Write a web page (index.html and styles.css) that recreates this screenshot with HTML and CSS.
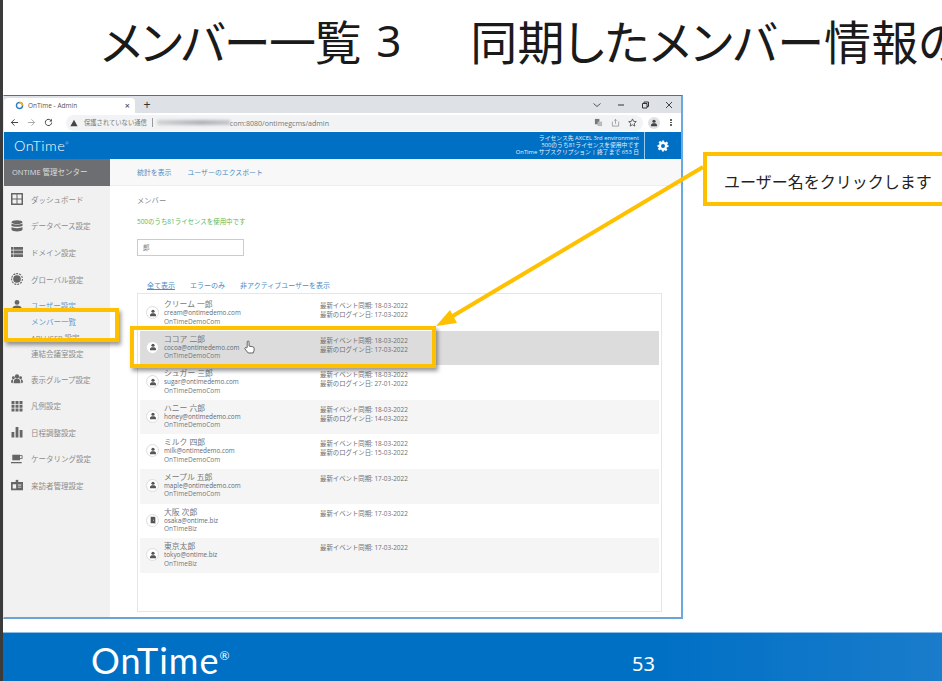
FILE: index.html
```html
<!DOCTYPE html>
<html lang="ja">
<head>
<meta charset="utf-8">
<title>メンバー一覧 3</title>
<link rel="stylesheet" href="styles.css">
</head>
<body>
<svg class="defs" width="0" height="0" aria-hidden="true">
  <symbol id="i-user" viewBox="0 0 12 12"><circle cx="6" cy="3.4" r="2.4"/><path d="M1.5 11V9.2C1.5 7.4 3.4 6.5 6 6.5s4.500.9 4.500 2.700V11z"/></symbol>
</svg>
<div class="page">
  <div class="strip"></div>
  <div class="slide">
    <h1 class="title"><span class="title-head">メンバー一覧</span><span class="title-num">3</span><span class="title-rest">同期したメンバー情報の</span></h1>
    <div class="window">
      <div class="tabstrip">
        <div class="tab">
          <svg class="favicon" viewBox="0 0 10 10"><circle cx="5" cy="5" r="3.4" fill="none" stroke="#2f7fc4" stroke-width="1.6"/><path d="M5 1.600A3.400 3.400 0 0 1 8.400 5" fill="none" stroke="#f0b323" stroke-width="1.6"/></svg>
          <span class="tab-title">OnTime - Admin</span>
          <span class="tab-close">×</span>
        </div>
        <span class="tab-new">+</span>
        <div class="winctl">
          <svg viewBox="0 0 10 10"><path d="M1.500 3.500 5 6.500l3.500-3" fill="none" stroke="#555"/></svg>
          <svg viewBox="0 0 10 10"><path d="M2 5h6" stroke="#333"/></svg>
          <svg viewBox="0 0 10 10"><path d="M2.500 3.500h4.500v4.500H2.500zM4 3.500V2h4.500v4.500H7" fill="none" stroke="#333"/></svg>
          <svg viewBox="0 0 10 10"><path d="M2 2l6 6M8 2l-6 6" stroke="#444"/></svg>
        </div>
      </div>
      <div class="toolbar">
        <svg class="nav" viewBox="0 0 10 10"><path d="M9 5H1.500M5 1.500 1.500 5 5 8.500" fill="none" stroke="#444" stroke-width="1.100"/></svg>
        <svg class="nav" viewBox="0 0 10 10"><path d="M1 5h7.500M5 1.500 8.500 5 5 8.500" fill="none" stroke="#aaa" stroke-width="1.100"/></svg>
        <svg class="nav" viewBox="0 0 10 10"><path d="M8.500 5A3.500 3.500 0 1 1 7.400 2.400" fill="none" stroke="#444" stroke-width="1.100"/><path d="M8.800 0.800v3h-3z" fill="#444"/></svg>
        <div class="omnibox">
          <svg class="warn" viewBox="0 0 10 10"><path d="M5 1 9.500 9H.5z" fill="#444"/></svg>
          <span class="notsecure">保護されていない通信</span>
          <span class="pipe"></span>
          <span class="blurred"></span>
          <span class="url">com:8080/ontimegcms/admin</span>
          <span class="omni-icons">
            <svg viewBox="0 0 10 10"><path d="M1 1h5v6H1z" fill="#777"/><path d="M4 4h5v5H4z" fill="#bbb"/></svg>
            <svg viewBox="0 0 10 10"><path d="M1.500 4v5h7V4M5 6.500V1.500M3.500 3 5 1.500 6.500 3" fill="none" stroke="#888" stroke-width=".8"/></svg>
            <svg viewBox="0 0 10 10"><path d="M5 1l1.200 2.700 3 .3-2.200 2 .6 3L5 7.500 2.400 9 3 6 .8 4l3-.3z" fill="none" stroke="#444" stroke-width=".9"/></svg>
          </span>
        </div>
        <span class="profile"><svg viewBox="0 0 12 12" fill="#444"><use href="#i-user"/></svg></span>
        <span class="dots"><i></i><i></i><i></i></span>
      </div>
      <header class="appbar">
        <div class="applogo">OnTime<sup>®</sup></div>
        <div class="license">
          <div>ライセンス先 AXCEL 3rd environment</div>
          <div>500のうち81ライセンスを使用中です</div>
          <div>OnTime サブスクリプション | 終了まで 653 日</div>
        </div>
        <div class="gear">
          <svg viewBox="0 0 24 24" fill="#fff"><path fill-rule="evenodd" d="M10 1h4l.7 3.200 1.900.8 2.800-1.800 2.800 2.800-1.800 2.800.8 1.900L23 10v4l-3.200.7-.8 1.900 1.800 2.800-2.800 2.800-2.800-1.800-1.900.8L14 23h-4l-.7-3.200-1.900-.8-2.800 1.800-2.800-2.800 1.800-2.800-.8-1.900L1 14v-4l3.200-.7.8-1.900-1.800-2.800 2.800-2.800 2.800 1.800 1.900-.8zM12 8a4 4 0 1 0 0 8 4 4 0 0 0 0-8z"/></svg>
        </div>
      </header>
      <div class="appbody">
        <nav class="sidebar">
          <div class="side-head">ONTIME 管理センター</div>
          <div class="side-item">
            <svg viewBox="0 0 12 12"><path fill-rule="evenodd" d="M0 0h12v12H0zM1.500 1.500v4h4v-4zm5 0v4h4v-4zm-5 5v4h4v-4zm5 0v4h4v-4z"/></svg>ダッシュボード</div>
          <div class="side-item">
            <svg viewBox="0 0 12 12"><ellipse cx="6" cy="2.200" rx="5.500" ry="2"/><path d="M.5 3.500C1.500 5 10.500 5 11.500 3.500v2.200C10.500 7.200 1.500 7.200.5 5.700zM.5 7C1.500 8.500 10.500 8.500 11.500 7v2.800C10.500 12 1.500 12 .5 9.800z"/></svg>データベース設定</div>
          <div class="side-item">
            <svg viewBox="0 0 12 12"><path d="M0 1h2.500v2.800H0zM3 1h9v2.800H3zM0 4.600h2.500v2.800H0zM3 4.600h9v2.800H3zM0 8.200h2.500V11H0zM3 8.200h9V11H3z"/></svg>ドメイン設定</div>
          <div class="side-item">
            <svg viewBox="0 0 12 12"><circle cx="6" cy="6" r="3.800"/><circle cx="6" cy="6" r="5.400" fill="none" stroke="#666" stroke-width="1.100" stroke-dasharray="2 1"/></svg>グローバル設定</div>
          <div class="side-item side-open">
            <svg viewBox="0 0 12 12"><use href="#i-user"/></svg>ユーザー設定</div>
          <div class="side-sub side-active">メンバー一覧</div>
          <div class="side-sub">API USER 設定</div>
          <div class="side-sub">連結会議室設定</div>
          <div class="side-item side-after">
            <svg viewBox="0 0 14 12"><circle cx="7" cy="3" r="2.500"/><path d="M3 11c0-4 1.500-5.500 4-5.500s4 1.500 4 5.500z"/><circle cx="2.800" cy="4.500" r="1.700"/><circle cx="11.200" cy="4.500" r="1.700"/><path d="M0 10c0-2.500 1-3.800 2.500-3.800L2 11zM14 10c0-2.500-1-3.800-2.500-3.800L12 11z"/></svg>表示グループ設定</div>
          <div class="side-item">
            <svg viewBox="0 0 12 12"><path d="M.5 1h3v3h-3zM4.500 1h3v3h-3zM8.500 1h3v3h-3zM.5 4.700h3v3h-3zM4.500 4.700h3v3h-3zM8.500 4.700h3v3h-3zM.5 8.400h3v3h-3zM4.500 8.400h3v3h-3zM8.500 8.400h3v3h-3z"/></svg>凡例設定</div>
          <div class="side-item">
            <svg viewBox="0 0 12 12"><path d="M.5 6h2.800v5.500H.5zM4.600 1h2.800v10.500H4.600zM8.700 4h2.800v7.500H8.700z"/></svg>日程調整設定</div>
          <div class="side-item">
            <svg viewBox="0 0 14 12"><path d="M1.500 1h9v6.500h-9z"/><path d="M10.500 2H13v3.500h-2.500" fill="none" stroke="#666"/><path d="M0 9.500h12.500V11H0z"/></svg>ケータリング設定</div>
          <div class="side-item">
            <svg viewBox="0 0 14 12"><path fill-rule="evenodd" d="M0 2.500h14V12H0zM2 5v5h4V5zM8 5.500v1h4v-1zM8 8v1h4V8z"/><path d="M5.500 0h3v3h-3z"/></svg>来訪者管理設定</div>
        </nav>
        <main class="content">
          <div class="subnav">
            <a class="subnav-link">統計を表示</a>
            <a class="subnav-link">ユーザーのエクスポート</a>
          </div>
          <div class="members">
            <div class="m-title">メンバー</div>
            <div class="m-usage">500のうち81ライセンスを使用中です</div>
            <div class="m-search">郎</div>
            <div class="m-filters">
              <a class="m-filter m-filter-on">全て表示</a>
              <a class="m-filter">エラーのみ</a>
              <a class="m-filter">非アクティブユーザーを表示</a>
            </div>
            <div class="list">
              <div class="row">
                <span class="avatar"><svg viewBox="0 0 12 12"><use href="#i-user"/></svg></span>
                <div class="who"><div class="name">クリーム 一郎</div><div class="mail">cream@ontimedemo.com</div><div class="org">OnTimeDemoCom</div></div>
                <div class="when"><div>最新イベント同期: 18-03-2022</div><div>最新のログイン日: 17-03-2022</div></div>
              </div>
              <div class="row row-selected">
                <span class="avatar"><svg viewBox="0 0 12 12"><use href="#i-user"/></svg></span>
                <div class="who"><div class="name">ココア 二郎</div><div class="mail">cocoa@ontimedemo.com</div><div class="org">OnTimeDemoCom</div></div>
                <div class="when"><div>最新イベント同期: 18-03-2022</div><div>最新のログイン日: 17-03-2022</div></div>
              </div>
              <div class="row">
                <span class="avatar"><svg viewBox="0 0 12 12"><use href="#i-user"/></svg></span>
                <div class="who"><div class="name">シュガー 三郎</div><div class="mail">sugar@ontimedemo.com</div><div class="org">OnTimeDemoCom</div></div>
                <div class="when"><div>最新イベント同期: 18-03-2022</div><div>最新のログイン日: 27-01-2022</div></div>
              </div>
              <div class="row row-alt">
                <span class="avatar"><svg viewBox="0 0 12 12"><use href="#i-user"/></svg></span>
                <div class="who"><div class="name">ハニー 六郎</div><div class="mail">honey@ontimedemo.com</div><div class="org">OnTimeDemoCom</div></div>
                <div class="when"><div>最新イベント同期: 18-03-2022</div><div>最新のログイン日: 14-03-2022</div></div>
              </div>
              <div class="row">
                <span class="avatar"><svg viewBox="0 0 12 12"><use href="#i-user"/></svg></span>
                <div class="who"><div class="name">ミルク 四郎</div><div class="mail">milk@ontimedemo.com</div><div class="org">OnTimeDemoCom</div></div>
                <div class="when"><div>最新イベント同期: 18-03-2022</div><div>最新のログイン日: 15-03-2022</div></div>
              </div>
              <div class="row row-alt">
                <span class="avatar"><svg viewBox="0 0 12 12"><use href="#i-user"/></svg></span>
                <div class="who"><div class="name">メープル 五郎</div><div class="mail">maple@ontimedemo.com</div><div class="org">OnTimeDemoCom</div></div>
                <div class="when"><div>最新イベント同期: 17-03-2022</div></div>
              </div>
              <div class="row">
                <span class="avatar"><svg viewBox="0 0 12 12"><path fill-rule="evenodd" d="M2.500 1h5.500l1.500.8v9.700L8 11H2.500zM6.500 5.500v1.500h1V5.500z"/></svg></span>
                <div class="who"><div class="name">大阪 次郎</div><div class="mail">osaka@ontime.biz</div><div class="org">OnTimeBiz</div></div>
                <div class="when"><div>最新イベント同期: 17-03-2022</div></div>
              </div>
              <div class="row row-alt">
                <span class="avatar"><svg viewBox="0 0 12 12"><use href="#i-user"/></svg></span>
                <div class="who"><div class="name">東京太郎</div><div class="mail">tokyo@ontime.biz</div><div class="org">OnTimeBiz</div></div>
                <div class="when"><div>最新イベント同期: 17-03-2022</div></div>
              </div>
            </div>
          </div>
        </main>
      </div>
    </div>
    <footer class="footer">
      <div class="foot-logo">OnTime<sup>®</sup></div>
      <div class="foot-num">53</div>
    </footer>
  </div>

  <div class="hl hl-menu"></div>
  <div class="hl hl-row"></div>
  <svg class="arrow" viewBox="0 0 942 681">
    <path d="M703 167 446 320" fill="none" stroke="#ffc000" stroke-width="4"/>
    <path d="M436 326 450 310 457 323z" fill="#ffc000"/>
  </svg>
  <svg class="hand" viewBox="0 0 12 15"><path d="M3.500 8V2a1 1 0 0 1 2 0v4.500l4.200.8c.8.200 1.300.8 1.300 1.600v2.100L10 14H4.500L1 9.500c-.5-.8.5-1.800 1.300-1.100z" fill="#fff" stroke="#333" stroke-width=".8"/></svg>
  <div class="callout">ユーザー名をクリックします</div>
</div>
</body>
</html>
```
FILE: styles.css
```css
* { box-sizing: border-box; }
html, body { margin: 0; height: 100%; background: #fff; overflow: hidden; }
body { font-family: "Open Sans", "Noto Sans CJK JP", sans-serif; }
.defs { position: absolute; }
.page { position: relative; display: flex; width: 942px; height: 681px; overflow: hidden; }
.strip { width: 3px; flex: none; background: #3b3b3b; }
.slide { flex: 1; min-width: 0; display: flex; flex-direction: column; }

.title {
  margin: 0; height: 95px; padding: 10px 0 0 98px;
  font: 400 47px/60px "Noto Sans CJK JP", sans-serif;
  font-feature-settings: "palt";
  color: #1a1a1a; white-space: nowrap; overflow: hidden; display: flex;
}
.title-head { letter-spacing: -1.400px; }
.title-num { margin-left: 16px; font-family: "Noto Sans", sans-serif; font-size: 44px; }
.title-rest { margin-left: 69px; letter-spacing: .2px; }

.window {
  width: 680px; height: 524px; flex: none; display: flex; flex-direction: column;
  border: 1px solid #6aa9e0; border-top-color: #2a78bf; border-left: 1px solid #e8e8e8;
  border-right-width: 2px; border-bottom-color: #6aa3d8; border-bottom-width: 2px;
}
.tabstrip { height: 17px; flex: none; background: #dee1e6; display: flex; align-items: flex-end; }
.tab { width: 131px; height: 15px; background: #fff; border-radius: 4px 4px 0 0; display: flex; align-items: center; padding: 0 5px 0 11px; }
.favicon { width: 9px; height: 9px; flex: none; }
.tab-title { margin-left: 4px; font-size: 6.500px; color: #555; flex: 1; }
.tab-close { font-size: 9px; color: #333; line-height: 1; }
.tab-new { width: 24px; height: 15px; text-align: center; font: 400 12px/15px "Liberation Sans", sans-serif; color: #333; }
.winctl { margin-left: auto; display: flex; align-items: center; gap: 14px; height: 17px; padding-right: 7px; }
.winctl svg { width: 10px; height: 10px; }

.toolbar { height: 19px; flex: none; background: #fff; display: flex; align-items: center; padding: 0 0 0 6px; }
.nav { width: 9px; height: 9px; margin-right: 8px; flex: none; }
.omnibox { width: 577px; height: 16px; margin-left: 5px; background: #f1f3f4; border-radius: 8px; display: flex; align-items: center; padding: 0 4px 0 4px; font-size: 7.100px; color: #666; white-space: nowrap; }
.warn { width: 8px; height: 8px; flex: none; }
.notsecure { margin-left: 6px; font-size: 6.300px; color: #777; }
.pipe { width: 1px; height: 9px; background: #999; margin: 0 4px 0 5px; }
.blurred { width: 73px; height: 5px; background: linear-gradient(90deg, #c8cacc, #9ea2a6 60%, #b8bbbe); filter: blur(1.500px); opacity: .8; flex: none; }
.url { color: #777; }
.omni-icons { margin-left: auto; display: flex; gap: 7px; align-items: center; padding-right: 2px; }
.omni-icons svg { width: 9px; height: 9px; margin-left: 1px; }
.profile { width: 12px; height: 12px; margin-left: 5px; border-radius: 50%; background: #dfe1e5; display: flex; align-items: center; justify-content: center; flex: none; }
.profile svg { width: 8px; height: 8px; }
.dots { display: flex; flex-direction: column; gap: 1px; margin-left: 10px; }
.dots i { width: 1.500px; height: 1.500px; border-radius: 50%; background: #444; }

.appbar { height: 27px; flex: none; background: #0070c5; color: #fff; display: flex; align-items: stretch; }
.applogo { margin-left: 10px; font: 300 14.500px/27px Lato, sans-serif; letter-spacing: .5px; color: #fff; }
.applogo sup { font-size: 4px; vertical-align: 6px; line-height: 0; }
.license { margin-left: auto; padding-top: 3px; text-align: right; font-size: 5.800px; line-height: 7px; color: #e4f0fa; white-space: nowrap; }
.gear { width: 37px; margin-left: 5px; border-left: 1px solid #9cc9ea; display: flex; align-items: center; justify-content: center; }
.gear svg { width: 12px; height: 12px; }

.appbody { flex: 1; min-height: 0; display: flex; background: #fff; }
.sidebar { width: 106px; flex: none; background: #f1f1f1; }
.side-head { height: 27px; padding-left: 8px; background: #6d6e71; color: #dedede; font-size: 7.500px; line-height: 27px; white-space: nowrap; }
.side-item { height: 26.600px; display: flex; align-items: center; font-size: 7.500px; color: #8b8b8b; white-space: nowrap; padding-left: 7px; }
.side-item svg { width: 12px; height: 12px; margin-right: 8px; fill: #666; flex: none; }
.side-open { color: #5a9bd0; height: 26px; }
.side-after { margin-top: 4px; }
.side-sub { height: 16px; line-height: 16px; padding-left: 27px; font-size: 7.500px; color: #8b8b8b; white-space: nowrap; }
.side-active { color: #5a9bd0; height: 16px; margin-top: -4.600px; }

.content { flex: 1; min-width: 0; display: flex; flex-direction: column; }
.subnav { height: 27px; flex: none; background: #f8f8f8; border-bottom: 1px solid #eee; display: flex; gap: 16px; align-items: center; padding-left: 27px; }
.subnav-link { font-size: 6.900px; color: #4a8cc4; }
.members { flex: 1; padding: 0 19px 5px 27px; display: flex; flex-direction: column; }
.m-title { height: 28px; padding-top: 8px; font-size: 7.300px; line-height: 12px; color: #888; }
.m-usage { height: 25px; padding-top: 2px; font-size: 6.450px; line-height: 12px; color: #5cb85c; }
.m-search { width: 107px; height: 17px; border: 1px solid #ccc; padding-left: 5px; font-size: 6.500px; line-height: 15px; color: #777; }
.m-filters { height: 37px; flex: none; display: flex; padding: 24px 0 0 10px; gap: 15px; font-size: 7px; line-height: 12px; white-space: nowrap; }
.m-filter { color: #4a8cc4; }
.m-filter-on { text-decoration: underline; }
.list { flex: 1; border: 1px solid #e6e6e6; padding: 2px 2px; }
.row { height: 34.600px; display: flex; align-items: flex-start; padding: 3px 0 0 6px; }
.row-alt { background: #f5f5f5; }
.row-selected { background: #dcdcdc; }
.avatar { width: 13px; height: 13px; margin: 7px 5px 0 0; border-radius: 50%; background: #fff; border: 1px solid #ddd; display: flex; align-items: center; justify-content: center; flex: none; }
.avatar svg { width: 8px; height: 8px; fill: #555; }
.who { width: 156px; flex: none; color: #777; white-space: nowrap; }
.name { font-size: 7.800px; line-height: 10px; color: #777; }
.mail { font-size: 6.350px; line-height: 8.500px; color: #5f6b75; }
.org { font-size: 6.500px; line-height: 8px; color: #6c7a85; }
.when { padding-top: 2px; font-size: 6.400px; line-height: 9px; color: #6f6f6f; white-space: nowrap; }

.footer { margin-top: auto; height: 49px; flex: none; background: linear-gradient(90deg, #0070c5 70%, #1a7ccb 100%); border-top: 1px solid #8dbde6; display: flex; }
.foot-logo { margin-left: 88px; font: 400 36px/54px Lato, sans-serif; letter-spacing: 1px; color: #fff; height: 48px; overflow: hidden; width: 146px; flex: none; }
.foot-logo sup { font-size: 12px; vertical-align: 14px; line-height: 0; }
.foot-num { margin-left: 395px; font: 400 20px/61px "Noto Sans", sans-serif; color: #fff; height: 48px; overflow: hidden; }

.hl { position: absolute; border: 4px solid #ffc000; box-shadow: 2px 3px 4px rgba(0,0,0,.4); }
.hl-menu { left: 4px; top: 308px; width: 115px; height: 34px; }
.hl-row { left: 130px; top: 326px; width: 306px; height: 42px; }
.arrow { position: absolute; left: 0; top: 0; width: 942px; height: 681px; pointer-events: none; }
.hand { position: absolute; left: 244px; top: 340px; width: 11px; height: 14px; }
.callout {
  position: absolute; left: 703px; top: 152px; width: 260px; height: 54px;
  border: 4px solid #ffc000; background: #fff;
  padding-left: 17px; font: 400 16px/50px "Noto Sans CJK JP", sans-serif; color: #222; white-space: nowrap;
}
```
